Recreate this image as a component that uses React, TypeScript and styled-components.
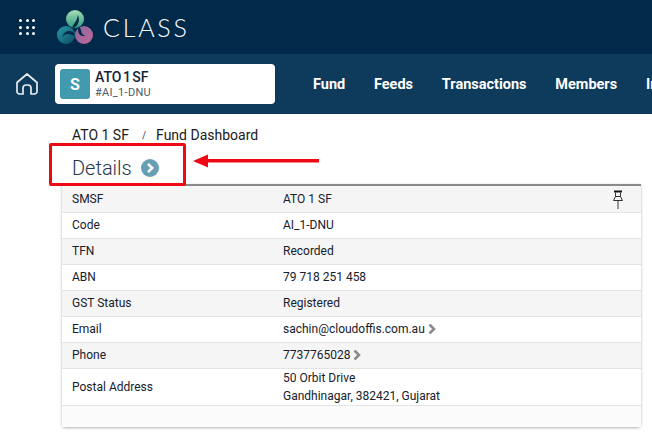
import React from 'react';
import styled, { createGlobalStyle } from 'styled-components';

const GlobalStyle = createGlobalStyle`
  html, body {
    margin: 0;
    padding: 0;
    background: #fff;
    font-family: Roboto, "Liberation Sans", sans-serif;
    overflow: hidden;
  }
`;

const Page = styled.div`
  position: relative;
  width: 652px;
  height: 443px;
  overflow: hidden;
`;

const TopBar = styled.header`
  height: 54px;
  background: #012949;
  display: flex;
  align-items: center;
  padding-left: 19px;
`;

const Waffle = styled.div`
  display: grid;
  grid-template-columns: repeat(3, 3px);
  gap: 3.5px;
  margin-right: 22px;
  span {
    width: 3px;
    height: 3px;
    border-radius: 50%;
    background: #fff;
  }
`;

const LogoText = styled.span`
  margin-left: 10px;
  font-family: Lato, sans-serif;
  font-weight: 300;
  font-size: 25px;
  letter-spacing: 2.8px;
  color: #fff;
`;

const NavBar = styled.nav`
  height: 60px;
  background: #0e3a5b;
  display: flex;
  align-items: center;
  padding-left: 16px;
  white-space: nowrap;
  overflow: hidden;
  > svg {
    flex-shrink: 0;
  }
`;

const FundCard = styled.div`
  width: 220px;
  height: 40px;
  box-sizing: border-box;
  margin-left: 17px;
  margin-right: 38px;
  padding: 5px;
  background: #fff;
  border-radius: 4px;
  display: flex;
  gap: 5px;
  flex-shrink: 0;
`;

const Avatar = styled.div`
  width: 30px;
  height: 30px;
  border-radius: 3px;
  background: #429aae;
  color: #fff;
  font-weight: 700;
  font-size: 16px;
  display: flex;
  align-items: center;
  justify-content: center;
`;

const FundInfo = styled.div`
  display: flex;
  flex-direction: column;
`;

const FundName = styled.div`
  font-size: 14px;
  line-height: 17px;
  font-weight: 500;
  word-spacing: -2px;
  color: #16263a;
`;

const FundCode = styled.div`
  font-size: 11px;
  line-height: 14px;
  color: #4c5a68;
  letter-spacing: 0.3px;
`;

const NavLinks = styled.div`
  display: flex;
  gap: 28.75px;
`;

const NavLink = styled.a`
  color: #fff;
  font-size: 14.5px;
  font-weight: 700;
`;

const Content = styled.main`
  padding: 12px 11px 0 62px;
`;

const Breadcrumb = styled.div`
  display: flex;
  align-items: center;
  height: 18px;
  padding-left: 10px;
  font-size: 14px;
  color: #1a1a1a;
`;

const Slash = styled.span`
  margin: 0 10px 0 13px;
  font-size: 10px;
  color: #444;
`;

const Heading = styled.h2`
  margin: 0;
  box-sizing: border-box;
  height: 40px;
  padding: 8px 0 0 10px;
  display: flex;
  align-items: center;
  gap: 9px;
  font-size: 20px;
  font-weight: 300;
  color: #24384c;
`;

const Table = styled.div`
  border-top: 2px solid #8a8a8a;
  padding-top: 1px;
  background: #f5f5f5;
  border-radius: 0 0 4px 4px;
  box-shadow: 0 1px 3px rgba(0, 0, 0, 0.3);
`;

const Row = styled.div<{ $shaded?: boolean; $tall?: boolean; $blank?: boolean }>`
  display: grid;
  grid-template-columns: 211px 1fr;
  align-items: center;
  box-sizing: border-box;
  height: ${p => (p.$blank ? '21px' : p.$tall ? '37px' : '26px')};
  padding: 0 0 ${p => (p.$tall ? '0' : '1px')} 10px;
  background: ${p => (p.$shaded ? '#f5f5f5' : p.$blank ? '#fbfbfb' : '#fff')};
  border-bottom: ${p => (p.$blank ? 'none' : '1px solid #e4e4e4')};
  font-size: 12px;
  color: #16202c;
`;

const Value = styled.div`
  position: relative;
  display: flex;
  align-items: center;
  gap: 3px;
`;

const Address = styled.div`
  line-height: 18px;
`;

const PinSlot = styled.span`
  position: absolute;
  right: 17px;
  top: -2px;
  line-height: 0;
`;

const Annotation = styled.div`
  position: absolute;
  left: 49px;
  top: 143px;
  width: 137px;
  height: 43px;
  box-sizing: border-box;
  border: 3px solid #ee0a14;
  border-radius: 2px;
`;

const ArrowOverlay = styled.svg`
  position: absolute;
  left: 190px;
  top: 152px;
`;

const Logo = () => (
  <svg width="36" height="34" viewBox="0 0 36 34">
    <defs>
      <linearGradient id="lg-top" x1="0" y1="0" x2="0" y2="1">
        <stop offset="0" stopColor="#a9dcb6" />
        <stop offset="1" stopColor="#2c9c84" />
      </linearGradient>
      <linearGradient id="lg-left" x1="0" y1="0" x2="1" y2="1">
        <stop offset="0" stopColor="#2a9bab" />
        <stop offset="1" stopColor="#0c4a62" />
      </linearGradient>
      <linearGradient id="lg-right" x1="0" y1="0" x2="1" y2="1">
        <stop offset="0" stopColor="#86699c" />
        <stop offset="1" stopColor="#c4679a" />
      </linearGradient>
    </defs>
    <circle cx="18" cy="9" r="9" fill="url(#lg-top)" />
    <circle cx="9" cy="25" r="9" fill="url(#lg-left)" />
    <circle cx="27" cy="25" r="9" fill="url(#lg-right)" />
    <path d="M15.500 18C16 14 19 12 20 9c.4-1.500.6-3 .8-4 1.500 3 1.500 6 0 9-1 2-2.500 3.500-5.300 4Z" fill="#012949" />
    <path d="M18 25.500c-3-.5-5-2-8-1.500-2 .4-3.500 1.500-4.500 3 .5-3 2.500-5.500 6-6 3-.4 5.500 1 6.500 4.500Z" fill="#012949" />
    <path d="M21.500 17c1.500.5 2.500 2 2.700 4 .3 2.500 1.500 4 4.300 4.500-3 1-6 0-7-3-.6-2-.6-3.800 0-5.500Z" fill="#012949" />
  </svg>
);

const HomeIcon = () => (
  <svg width="22" height="22" viewBox="0 0 22 22" fill="none" stroke="#e8edf1" strokeWidth="1.7" strokeLinejoin="round">
    <path d="M1 9.500 11 1l10 8.500v9a2.500 2.500 0 0 1-2.500 2.500H15v-6a3 3 0 0 0-3-3h-2a3 3 0 0 0-3 3v6H3.500A2.500 2.500 0 0 1 1 18.500Z" />
  </svg>
);

const DetailsArrow = () => (
  <svg width="18" height="18" viewBox="0 0 18 18">
    <circle cx="9" cy="9" r="9" fill="#659fb3" />
    <path d="M7 4.800 11.200 9 7 13.200" fill="none" stroke="#fff" strokeWidth="2.600" />
  </svg>
);

const Pin = () => (
  <svg width="12" height="20" viewBox="0 0 12 20" fill="none" stroke="#333">
    <path d="M2 1.500h8" strokeWidth="2" stroke="#111" />
    <path d="M3.500 2.500v4M8.500 2.500v4" />
    <path d="M3.500 6.500 1.500 10.500h9l-2-4Z" />
    <path d="M6 11v8" stroke="#777" strokeWidth="1.500" />
  </svg>
);

const Chevron = () => (
  <svg width="8" height="10" viewBox="0 0 8 10">
    <path d="M1.500 .5 6 5 1.500 9.500" fill="none" stroke="#8a8a8a" strokeWidth="2.600" />
  </svg>
);

const App = () => {
  return (
    <Page>
      <GlobalStyle />
      <TopBar>
        <Waffle>
          {Array.from({ length: 9 }).map((_, i) => (
            <span key={i} />
          ))}
        </Waffle>
        <Logo />
        <LogoText>CLASS</LogoText>
      </TopBar>
      <NavBar>
        <HomeIcon />
        <FundCard>
          <Avatar>S</Avatar>
          <FundInfo>
            <FundName>ATO 1 SF</FundName>
            <FundCode>#AI_1-DNU</FundCode>
          </FundInfo>
        </FundCard>
        <NavLinks>
          <NavLink>Fund</NavLink>
          <NavLink>Feeds</NavLink>
          <NavLink>Transactions</NavLink>
          <NavLink>Members</NavLink>
          <NavLink>Investments</NavLink>
        </NavLinks>
      </NavBar>
      <Content>
        <Breadcrumb>
          ATO 1 SF
          <Slash>/</Slash>
          Fund Dashboard
        </Breadcrumb>
        <Heading>
          Details
          <DetailsArrow />
        </Heading>
        <Table>
          <Row $shaded>
            <div>SMSF</div>
            <Value>
              ATO 1 SF
              <PinSlot>
                <Pin />
              </PinSlot>
            </Value>
          </Row>
          <Row>
            <div>Code</div>
            <Value>AI_1-DNU</Value>
          </Row>
          <Row $shaded>
            <div>TFN</div>
            <Value>Recorded</Value>
          </Row>
          <Row>
            <div>ABN</div>
            <Value>79 718 251 458</Value>
          </Row>
          <Row $shaded>
            <div>GST Status</div>
            <Value>Registered</Value>
          </Row>
          <Row>
            <div>Email</div>
            <Value>
              sachin@cloudoffis.com.au
              <Chevron />
            </Value>
          </Row>
          <Row $shaded>
            <div>Phone</div>
            <Value>
              7737765028
              <Chevron />
            </Value>
          </Row>
          <Row $tall>
            <div>Postal Address</div>
            <Address>
              50 Orbit Drive
              <br />
              Gandhinagar, 382421, Gujarat
            </Address>
          </Row>
          <Row $blank />
        </Table>
      </Content>
      <Annotation />
      <ArrowOverlay width="132" height="18" viewBox="0 0 132 18">
        <path d="M3 9 18 2.500v4.500h111v3.500H18v5Z" fill="#ee0a14" />
      </ArrowOverlay>
    </Page>
  );
};

export default App;
